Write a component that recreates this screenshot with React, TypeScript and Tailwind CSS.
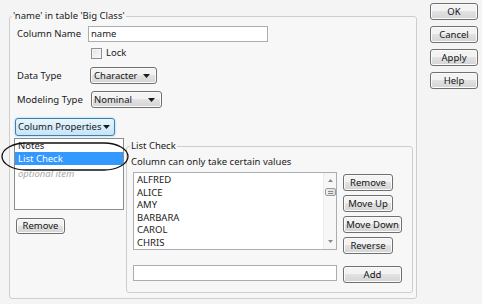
import React from "react";

const face =
  "rounded-[3px] border border-[#707070] bg-linear-to-b from-[#f3f3f3] from-45% via-[#e2e2e2] via-50% to-[#d4d4d4] shadow-[inset_0_0_0_1px_#fbfbfb] text-[#151515] leading-[14px] whitespace-nowrap";
const btn = `flex items-center justify-center ${face}`;
const drop = `flex items-center justify-between ${face}`;

const Arrow = () => (
  <svg width="7" height="4" viewBox="0 0 7 4" className="shrink-0">
    <path d="M0 0 L7 0 L3.5 4 Z" fill="#1a1a1a" />
  </svg>
);

export default function App() {
  const values = ["ALFRED", "ALICE", "AMY", "BARBARA", "CAROL", "CHRIS"];
  return (
    <div className="relative w-[482px] h-[304px] overflow-hidden bg-[#f4f4f4] font-['Noto_Sans',sans-serif] text-[9.5px] leading-[16px] text-[#1a1a1a] flex items-start">
      <fieldset className="ml-[9px] mt-[8px] w-[408px] h-[291px] min-w-0 border border-[#cdcdcd] rounded-[3px] bg-[#f7f7f7] flex flex-col">
        <legend className="ml-[2px] px-[1px] leading-[16px]">
          'name' in table 'Big Class'
        </legend>

        {/* Column Name */}
        <div className="mt-[2px] h-[16px] flex items-center">
          <span className="ml-[7px] w-[71px]">Column Name</span>
          <div className="w-[180px] h-[16px] border border-[#abadb3] bg-white flex items-center pl-[2px] leading-[14px]">
            name
          </div>
        </div>

        {/* Lock */}
        <div className="mt-[4px] h-[14px] flex items-center">
          <div className="ml-[81px] w-[11px] h-[11px] border border-[#8e8f8f] bg-linear-to-br from-[#e4e4e4] to-[#f8f8f8] shadow-[inset_0_0_0_1px_#f4f4f4]" />
          <span className="ml-[4px]">Lock</span>
        </div>

        {/* Data Type */}
        <div className="mt-[7px] h-[17px] flex items-center">
          <span className="ml-[7px] w-[73px]">Data Type</span>
          <div className={`${drop} w-[67px] h-[17px] pl-[3px] pr-[6px]`}>
            <span>Character</span>
            <Arrow />
          </div>
        </div>

        {/* Modeling Type */}
        <div className="mt-[7px] h-[17px] flex items-center">
          <span className="ml-[7px] w-[74px]">Modeling Type</span>
          <div className={`${drop} w-[71px] h-[17px] pl-[2px] pr-[6px]`}>
            <span>Nominal</span>
            <Arrow />
          </div>
        </div>

        {/* Column Properties */}
        <div className="mt-[10px] ml-[5px] w-[100px] h-[18px] flex items-center justify-between pl-[2px] pr-[4px] rounded-[3px] border border-[#3c7fb1] bg-linear-to-b from-[#e8f5fd] to-[#c6e4f7] shadow-[0_0_2px_#7fc3ee] leading-[14px] whitespace-nowrap">
          <span className="whitespace-nowrap">Column Properties</span>
          <Arrow />
        </div>

        {/* Bottom area */}
        <div className="mt-[2px] flex items-start">
          <div className="ml-[4px] w-[110px] flex flex-col">
            <div className="h-[72px] border border-[#8c8c8c] bg-white flex flex-col overflow-hidden leading-[13px]">
              <div className="h-[13px] pl-[3px]">Notes</div>
              <div className="h-[13px] pl-[3px] bg-[#3399ff] text-white">List Check</div>
              <div className="h-[14px] pl-[3px] pt-[2px] italic text-[#a8a8a8]">optional item</div>
            </div>
            <div className={`${btn} mt-[8px] ml-[2px] w-[49px] h-[16px]`}>Remove</div>
          </div>

          <fieldset className="ml-[2px] w-[287px] h-[155px] min-w-0 border border-[#cdcdcd] rounded-[3px] flex flex-col">
            <legend className="ml-[3px] px-[1px] leading-[16px]">List Check</legend>
            <div className="ml-[4px] h-[16px]">Column can only take certain values</div>

            <div className="mt-[2px] flex items-start">
              <div className="ml-[6px] w-[204px] h-[78px] border border-[#abadb3] bg-white flex">
                <div className="flex-1 pl-[3px] pt-[1px] leading-[12.6px] flex flex-col">
                  {values.map((v) => (
                    <div key={v} className="h-[12.6px]">
                      {v}
                    </div>
                  ))}
                </div>
                <div className="w-[13px] h-full bg-[#f7f7f7] border-l border-[#ececec] flex flex-col items-center">
                  <svg width="5" height="3" viewBox="0 0 5 3" className="mt-[6px]">
                    <path d="M0 3 L2.5 0 L5 3 Z" fill="#8a8a8a" />
                  </svg>
                  <div className="mt-[6px] w-[11px] h-[8px] rounded-[2px] border border-[#9a9a9a] bg-linear-to-r from-[#f2f2f2] to-[#dcdcdc] flex flex-col items-center justify-center gap-[1px]">
                    <div className="w-[5px] h-[1px] bg-[#8a8a8a]" />
                    <div className="w-[5px] h-[1px] bg-[#8a8a8a]" />
                  </div>
                  <div className="flex-1" />
                  <svg width="5" height="3" viewBox="0 0 5 3" className="mb-[6px]">
                    <path d="M0 0 L5 0 L2.5 3 Z" fill="#8a8a8a" />
                  </svg>
                </div>
              </div>
              <div className="ml-[6px] pt-[2px] flex flex-col gap-[4px]">
                <div className={`${btn} w-[50px] h-[17px]`}>Remove</div>
                <div className={`${btn} w-[50px] h-[17px]`}>Move Up</div>
                <div className={`${btn} w-[59px] h-[17px]`}>Move Down</div>
                <div className={`${btn} w-[50px] h-[17px]`}>Reverse</div>
              </div>
            </div>

            <div className="mt-[11px] flex items-start">
              <div className="ml-[6px] w-[204px] h-[16px] border border-[#abadb3] bg-white" />
              <div className={`${btn} ml-[6px] mt-[1px] w-[59px] h-[17px]`}>Add</div>
            </div>
          </fieldset>
        </div>
      </fieldset>

      {/* Right-side buttons */}
      <div className="ml-[13px] mt-[3px] flex flex-col gap-[6px]">
        <div className={`${btn} w-[48px] h-[17px]`}>OK</div>
        <div className={`${btn} w-[48px] h-[17px]`}>Cancel</div>
        <div className={`${btn} w-[48px] h-[17px]`}>Apply</div>
        <div className={`${btn} w-[48px] h-[17px]`}>Help</div>
      </div>

      {/* Annotation oval */}
      <svg
        className="absolute left-[1px] top-[142px] pointer-events-none"
        width="128"
        height="30"
        viewBox="0 0 128 30"
      >
        <rect x="1" y="1" width="126" height="27" rx="24" ry="13.5" fill="none" stroke="#111" strokeWidth="1.3" />
      </svg>
    </div>
  );
}
